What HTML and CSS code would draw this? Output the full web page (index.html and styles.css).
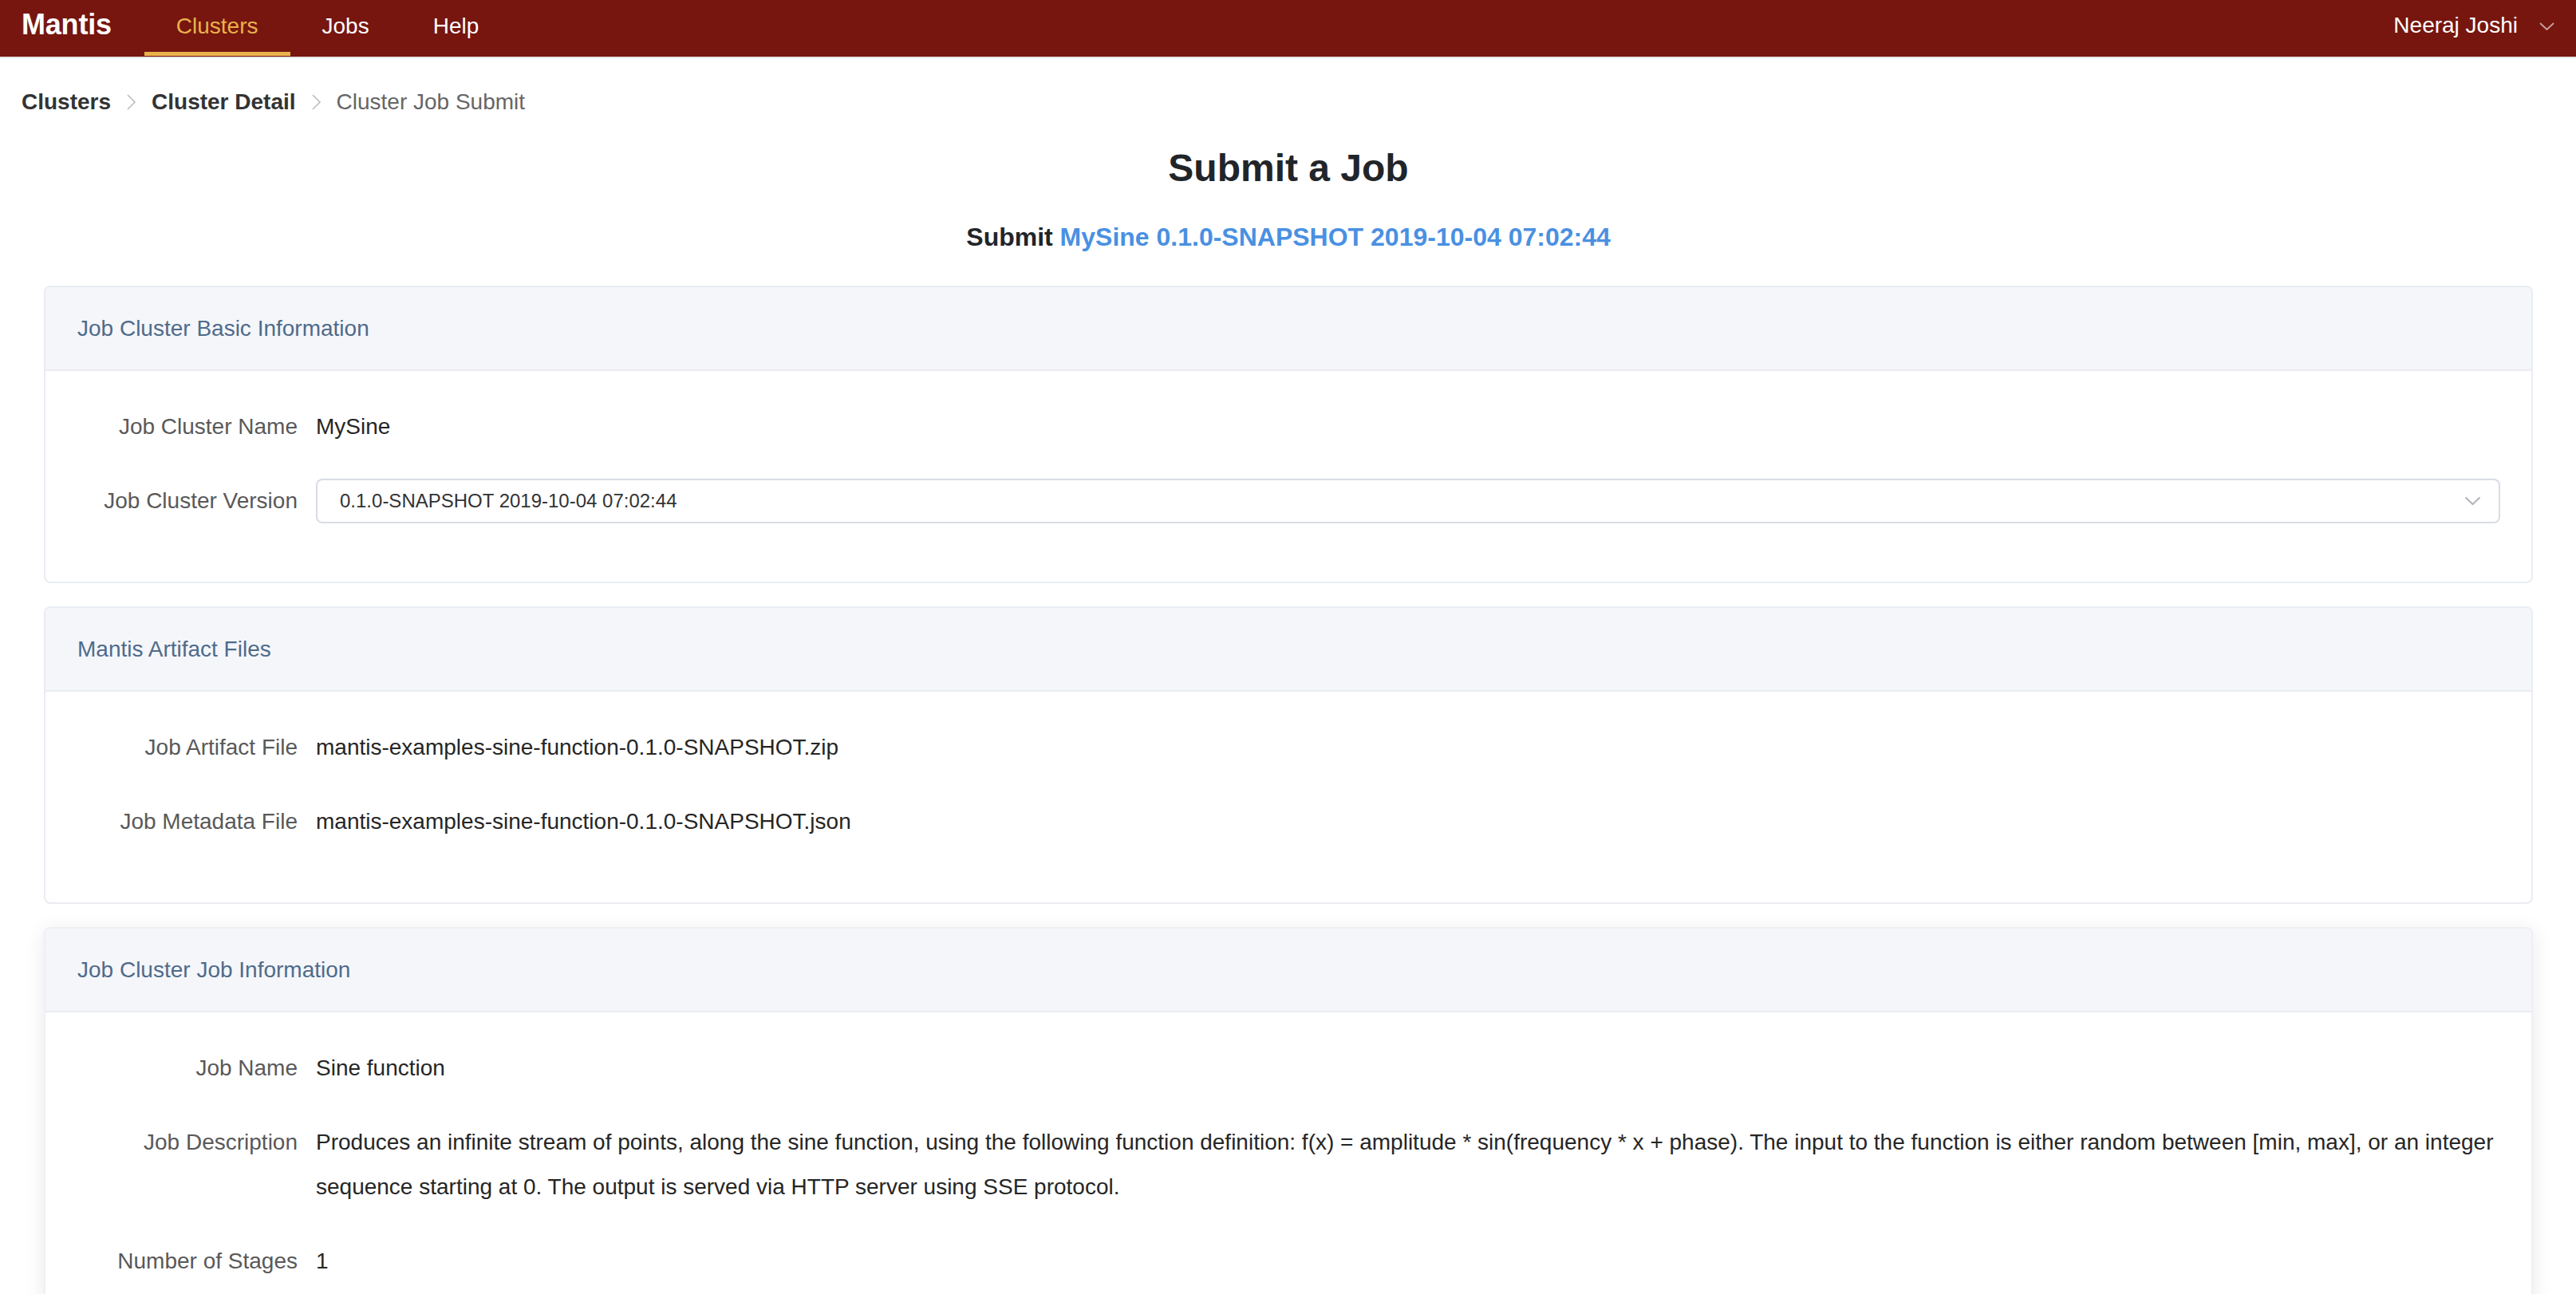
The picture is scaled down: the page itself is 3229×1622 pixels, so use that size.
FILE: index.html
```html
<!DOCTYPE html>
<html lang="en">
<head>
<meta charset="utf-8">
<title>Mantis - Cluster Job Submit</title>
<link rel="stylesheet" href="styles.css">
</head>
<body>
<header class="topbar">
  <div class="brand">Mantis</div>
  <nav class="mainnav">
    <a class="navitem navitem--active">Clusters</a>
    <a class="navitem">Jobs</a>
    <a class="navitem">Help</a>
  </nav>
  <div class="user">
    <span class="user-name">Neeraj Joshi</span>
    <svg class="user-caret" viewBox="0 0 19 10" width="19" height="10"><polyline points="1,1 9.5,9 18,1" fill="none" stroke="currentColor" stroke-width="1.8"/></svg>
  </div>
</header>

<div class="crumbs">
  <span class="crumb crumb--link">Clusters</span>
  <svg class="crumb-sep" viewBox="0 0 13 22" width="13" height="22"><polyline points="2,2 11,11 2,20" fill="none" stroke="currentColor" stroke-width="1.6"/></svg>
  <span class="crumb crumb--link">Cluster Detail</span>
  <svg class="crumb-sep" viewBox="0 0 13 22" width="13" height="22"><polyline points="2,2 11,11 2,20" fill="none" stroke="currentColor" stroke-width="1.6"/></svg>
  <span class="crumb crumb--current">Cluster Job Submit</span>
</div>

<main class="page">
  <h2 class="page-title">Submit a Job</h2>
  <h4 class="page-subtitle">Submit <span class="accent">MySine 0.1.0-SNAPSHOT 2019-10-04 07:02:44</span></h4>

  <section class="card">
    <div class="card-head">Job Cluster Basic Information</div>
    <div class="card-body">
      <div class="row">
        <div class="label">Job Cluster Name</div>
        <div class="value">MySine</div>
      </div>
      <div class="row">
        <div class="label">Job Cluster Version</div>
        <div class="value">
          <div class="select">
            <span class="select-text">0.1.0-SNAPSHOT 2019-10-04 07:02:44</span>
            <svg class="select-arrow" viewBox="0 0 21 12" width="21" height="12"><polyline points="1.5,1.5 10.5,10 19.5,1.5" fill="none" stroke="currentColor" stroke-width="2.2"/></svg>
          </div>
        </div>
      </div>
    </div>
  </section>

  <section class="card">
    <div class="card-head">Mantis Artifact Files</div>
    <div class="card-body">
      <div class="row">
        <div class="label">Job Artifact File</div>
        <div class="value">mantis-examples-sine-function-0.1.0-SNAPSHOT.zip</div>
      </div>
      <div class="row">
        <div class="label">Job Metadata File</div>
        <div class="value">mantis-examples-sine-function-0.1.0-SNAPSHOT.json</div>
      </div>
    </div>
  </section>

  <section class="card card--raised">
    <div class="card-head">Job Cluster Job Information</div>
    <div class="card-body">
      <div class="row">
        <div class="label">Job Name</div>
        <div class="value">Sine function</div>
      </div>
      <div class="row">
        <div class="label">Job Description</div>
        <div class="value">Produces an infinite stream of points, along the sine function, using the following function definition: f(x) = amplitude * sin(frequency * x + phase). The input to the function is either random between [min, max], or an integer sequence starting at 0. The output is served via HTTP server using SSE protocol.</div>
      </div>
      <div class="row">
        <div class="label">Number of Stages</div>
        <div class="value">1</div>
      </div>
    </div>
  </section>
</main>
</body>
</html>
```

FILE: styles.css
```css
* { box-sizing: border-box; }

html, body {
  margin: 0;
  padding: 0;
  background: #ffffff;
  font-family: "Liberation Sans", Arial, Helvetica, sans-serif;
  color: #333333;
}

/* ---------- top bar ---------- */
.topbar {
  display: flex;
  align-items: flex-start;
  height: 73px;
  padding: 0 27px;
  background: #76160f;
  border-bottom: 2px solid #e6e6e6;
}

.brand {
  font-size: 36px;
  font-weight: 700;
  line-height: 61px;
  color: #ffffff;
  letter-spacing: -0.2px;
}

.mainnav {
  display: flex;
  margin-left: 41px;
}

.navitem {
  display: block;
  padding: 0 40px;
  font-size: 28px;
  line-height: 65px;
  height: 70px;
  color: #ffffff;
  border-bottom: 5px solid transparent;
}

.navitem--active {
  color: #e9b14c;
  border-bottom-color: #e9b14c;
}

.user {
  margin-left: auto;
  display: flex;
  align-items: center;
  height: 64px;
  color: #ffffff;
}

.user-name {
  font-size: 28px;
  line-height: 64px;
}

.user-caret {
  margin-left: 27px;
  margin-top: 2px;
  color: rgba(255, 255, 255, 0.6);
}

/* ---------- breadcrumb ---------- */
.crumbs {
  display: flex;
  align-items: center;
  padding: 35px 27px 0;
  height: 75px;
  font-size: 28px;
  line-height: 40px;
}

.crumb--link {
  font-weight: 700;
  color: #333333;
}

.crumb--current {
  color: #666666;
}

.crumb-sep {
  margin: 0 19px 0 19px;
  color: #bdbdbd;
}

/* ---------- page ---------- */
.page {
  padding: 0 54px 0 55px;
}

.page-title {
  margin: 34px 0 0;
  text-align: center;
  font-size: 48px;
  line-height: 58px;
  font-weight: 700;
  color: #212529;
}

.page-subtitle {
  margin: 38px 0 0;
  text-align: center;
  font-size: 32px;
  line-height: 38px;
  font-weight: 700;
  color: #212529;
}

.accent {
  color: #4a90e2;
}

/* ---------- cards ---------- */
.card {
  margin-top: 42px;
  border: 2px solid #e9ecf2;
  border-radius: 8px;
  background: #ffffff;
  overflow: hidden;
}

.card + .card {
  margin-top: 29px;
}

.card--raised {
  border-color: #eef0f4;
  box-shadow: 0 4px 26px rgba(0, 0, 0, 0.09);
}

.card-head {
  height: 105px;
  padding: 0 40px;
  display: flex;
  align-items: center;
  background: #f5f6fa;
  border-bottom: 2px solid #e9ecf2;
  font-size: 28px;
  color: #4f6b8a;
}

.card-body {
  padding: 42px 39px 2px 39px;
}

.row {
  display: grid;
  grid-template-columns: 277px 1fr;
  column-gap: 23px;
  margin-bottom: 37px;
  font-size: 28px;
  line-height: 56px;
}

.row:last-child {
  margin-bottom: 71px;
}

.label {
  text-align: right;
  color: #595959;
}

.value {
  color: #262626;
}

/* ---------- select ---------- */
.select {
  display: flex;
  align-items: center;
  height: 56px;
  padding: 0 22px 0 28px;
  border: 2px solid #d9dce3;
  border-radius: 8px;
  background: #ffffff;
}

.select-text {
  font-size: 24px;
  line-height: 30px;
  color: #333333;
}

.select-arrow {
  margin-left: auto;
  color: #b3b4bc;
}
```
